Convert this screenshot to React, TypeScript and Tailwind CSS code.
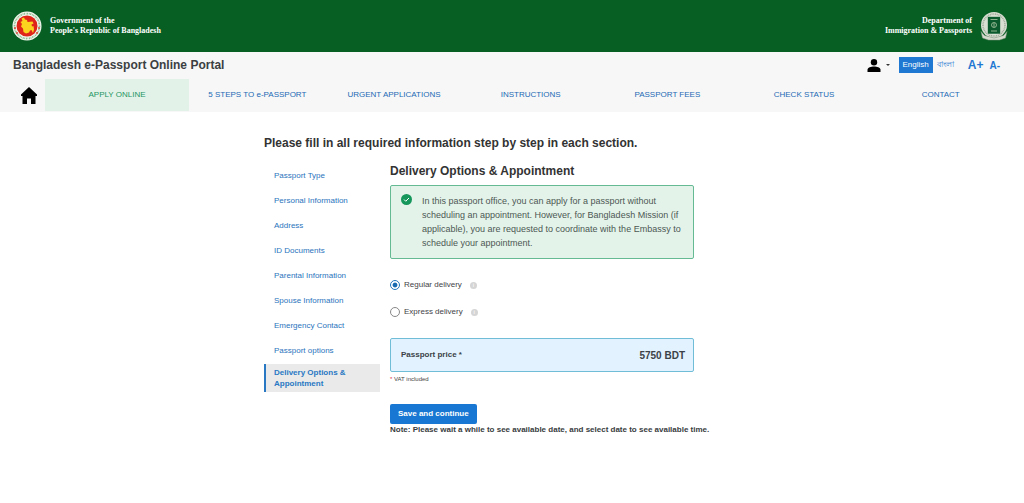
import React from "react";

const navItems = [
  "5 STEPS TO e-PASSPORT",
  "URGENT APPLICATIONS",
  "INSTRUCTIONS",
  "PASSPORT FEES",
  "CHECK STATUS",
  "CONTACT",
];

const steps = [
  "Passport Type",
  "Personal Information",
  "Address",
  "ID Documents",
  "Parental Information",
  "Spouse Information",
  "Emergency Contact",
  "Passport options",
];

function GovernmentSeal() {
  return (
    <svg viewBox="0 0 60 60" className="size-[30px]" aria-hidden="true">
      <circle cx="30" cy="30" r="29" fill="#f4f6ee" />
      <circle
        cx="30"
        cy="30"
        r="25"
        fill="none"
        stroke="#8fbf92"
        strokeWidth="3.5"
        strokeDasharray="2.5 1.5 1.5 1"
      />
      <circle cx="30" cy="30" r="21" fill="#df2419" />
      <g fill="#d93a2b">
        <circle cx="6" cy="34" r="1.8" />
        <circle cx="54" cy="34" r="1.8" />
        <circle cx="10" cy="44" r="1.8" />
        <circle cx="50" cy="44" r="1.8" />
      </g>
      <path
        d="M19 15l5-2 2 4 4 1 1 4 10-1 2 4-4 2 1 4 3-1 1 7-2 7-3-6-3 1-2 4-6 2-5-3-1-7-4-4 2-5-3-4 4-2z"
        fill="#fbd31f"
      />
    </svg>
  );
}

function PassportSeal() {
  return (
    <svg viewBox="0 0 56 60" className="h-[30px] w-7" aria-hidden="true">
      <circle cx="28" cy="28" r="26" fill="#d9ded3" />
      <circle
        cx="28"
        cy="28"
        r="22"
        fill="none"
        stroke="#9eaa99"
        strokeWidth="3"
        strokeDasharray="2 1.5"
      />
      <path
        d="M2 41l7 8 19 5 19-5 7-8-3 13-12 4H17L5 54z"
        fill="#d5dacf"
        stroke="#83957f"
      />
      <rect x="15" y="11" width="26" height="35" rx="1" fill="#0a5a2d" stroke="#eef2e9" />
      <circle cx="28" cy="28" r="5" fill="none" stroke="#b8cfac" strokeWidth="1.5" />
      <path d="M21 17h14M28 24v8M22 40h12" stroke="#b8cfac" strokeWidth="1.5" />
    </svg>
  );
}

function Header() {
  return (
    <header className="flex h-[52px] items-center justify-between bg-[#075f24] pr-4 pl-3 font-['Liberation_Serif',serif] text-[8px] leading-[10px] font-bold text-white">
      <div className="flex items-center gap-2">
        <GovernmentSeal />
        <p>
          Government of the
          <br />
          People's Republic of Bangladesh
        </p>
      </div>
      <div className="flex items-center gap-2 text-right">
        <p>
          Department of
          <br />
          Immigration &amp; Passports
        </p>
        <PassportSeal />
      </div>
    </header>
  );
}

function Toolbar() {
  return (
    <div className="flex h-[26px] items-center justify-between pr-6 pl-[13px]">
      <p className="text-[12px] font-bold text-[#3c3f42]">
        Bangladesh e-Passport Online Portal
      </p>
      <div className="flex items-center text-[#1f78d1]">
        <button aria-label="Account" className="mr-2 flex items-center gap-1">
          <svg viewBox="0 0 14 13" className="h-[13px] w-3.5" aria-hidden="true">
            <circle cx="7" cy="3.2" r="3.2" />
            <path d="M0.5 13v-2.2C0.5 8.5 4 7.6 7 7.6s6.5.9 6.5 3.2V13z" />
          </svg>
          <svg viewBox="0 0 6 4" className="h-1 w-1.5" aria-hidden="true">
            <path d="M1 1h4L3 3z" fill="#333" />
          </svg>
        </button>
        <button className="h-4 bg-[#1f78d1] px-1 text-[8px] text-white">English</button>
        <button className="ml-1 text-[8px]">বাংলা</button>
        <button className="ml-[14px] text-[12px] font-bold">A+</button>
        <button className="ml-1.5 text-[10px] font-bold">A-</button>
      </div>
    </div>
  );
}

function Navigation() {
  return (
    <nav className="flex pt-px pr-[15px] pb-px pl-[13px] text-[8px] text-[#1c6ab5]">
      <a href="#" aria-label="Home" className="flex h-8 w-8 items-center justify-center text-black">
        <svg viewBox="0 0 16 17" className="h-[17px] w-4" fill="currentColor" aria-hidden="true">
          <path d="M8 0L0 7.5V9h1.5v8H6v-5.5h4V17h4.500V9H16V7.5z" />
        </svg>
      </a>
      <a
        href="#"
        className="flex h-8 w-36 items-center justify-center bg-[#e2f2e9] text-[#249561]"
      >
        APPLY ONLINE
      </a>
      {navItems.map((item) => (
        <a key={item} href="#" className="flex h-8 flex-1 items-center justify-center">
          {item}
        </a>
      ))}
    </nav>
  );
}

function StepList() {
  return (
    <aside className="w-[116px] shrink-0 text-[8px] text-[#2a74bd]">
      <ul>
        {steps.map((step) => (
          <li key={step}>
            <a href="#" className="flex h-[25px] items-center pb-0.5 pl-2.5">
              {step}
            </a>
          </li>
        ))}
        <li>
          <a
            href="#"
            aria-current="step"
            className="block border-l-2 border-[#2878c4] bg-[#eaeaea] py-[3px] pr-4 pl-2 leading-[11px] font-bold text-[#2878c4]"
          >
            Delivery Options &amp; Appointment
          </a>
        </li>
      </ul>
    </aside>
  );
}

function DeliveryOption({
  label,
  value,
  checked,
}: {
  label: string;
  value: string;
  checked?: boolean;
}) {
  return (
    <div className="flex items-center">
      <input
        type="radio"
        id={value}
        name="delivery"
        value={value}
        defaultChecked={checked}
        className="size-2.5 appearance-none rounded-full border border-[#888] bg-white checked:border-[#2176bd] checked:bg-[radial-gradient(circle,#1769b0_35%,#fff_50%)]"
      />
      <label htmlFor={value} className="ml-1 text-[8px] text-[#3f4347]">
        {label}
      </label>
      <button
        type="button"
        aria-label={`About ${label}`}
        className="ml-2 size-[7px] rounded-full bg-[#d5d5d5] text-[6px] leading-[7px] text-white"
      >
        i
      </button>
    </div>
  );
}

function DeliveryForm() {
  return (
    <section className="min-w-0 flex-1">
      <h2 className="text-[12px] leading-[14px] font-bold text-[#333]">
        Delivery Options &amp; Appointment
      </h2>
      <div className="mt-[7px] mr-[66px] flex items-start gap-2.5 rounded-xs border border-[#65ba94] bg-[#e4f3ea] py-2 pr-2.5 pl-2.5">
        <svg viewBox="0 0 22 22" className="size-[11px] shrink-0" aria-hidden="true">
          <circle cx="11" cy="11" r="11" fill="#15965a" />
          <path d="M6 11l3.5 3.5L16 8" fill="none" stroke="#fff" strokeWidth="2" />
        </svg>
        <p className="text-[9px] leading-[14px] text-[#4c5853]">
          In this passport office, you can apply for a passport without scheduling an
          appointment. However, for Bangladesh Mission (if applicable), you are requested to
          coordinate with the Embassy to schedule your appointment.
        </p>
      </div>
      <form>
        <div className="mt-5 space-y-[15px]">
          <DeliveryOption label="Regular delivery" value="regular" checked />
          <DeliveryOption label="Express delivery" value="express" />
        </div>
        <div className="mt-5 mr-[66px] flex h-[34px] items-center justify-between rounded-xs border border-[#70bdd8] bg-[#e2f2fe] pr-2 pl-2.5 font-bold text-[#3b4248]">
          <span className="text-[8px]">Passport price *</span>
          <span className="text-[10px]">5750 BDT</span>
        </div>
        <p className="mt-[3px] text-[6px] leading-[8px] text-[#444]">
          <span className="text-[#dd3347]">*</span> VAT included
        </p>
        <button
          type="button"
          className="mt-[21px] block h-5 rounded-xs bg-[#1877d2] px-2 text-[8px] font-bold text-white"
        >
          Save and continue
        </button>
        <p className="text-[8px] leading-[12px] font-bold text-[#383c40]">
          Note: Please wait a while to see available date, and select date to see available time.
        </p>
      </form>
    </section>
  );
}

export default function App() {
  return (
    <div className="min-h-screen bg-white font-['Liberation_Sans',Arial,sans-serif]">
      <Header />
      <div className="bg-[#f7f7f7]">
        <Toolbar />
        <Navigation />
      </div>
      <main className="mx-auto max-w-[496px] pt-6">
        <h1 className="text-[12px] leading-[14px] font-bold text-[#333]">
          Please fill in all required information step by step in each section.
        </h1>
        <div className="mt-3.5 flex gap-2.5">
          <StepList />
          <DeliveryForm />
        </div>
      </main>
    </div>
  );
}
